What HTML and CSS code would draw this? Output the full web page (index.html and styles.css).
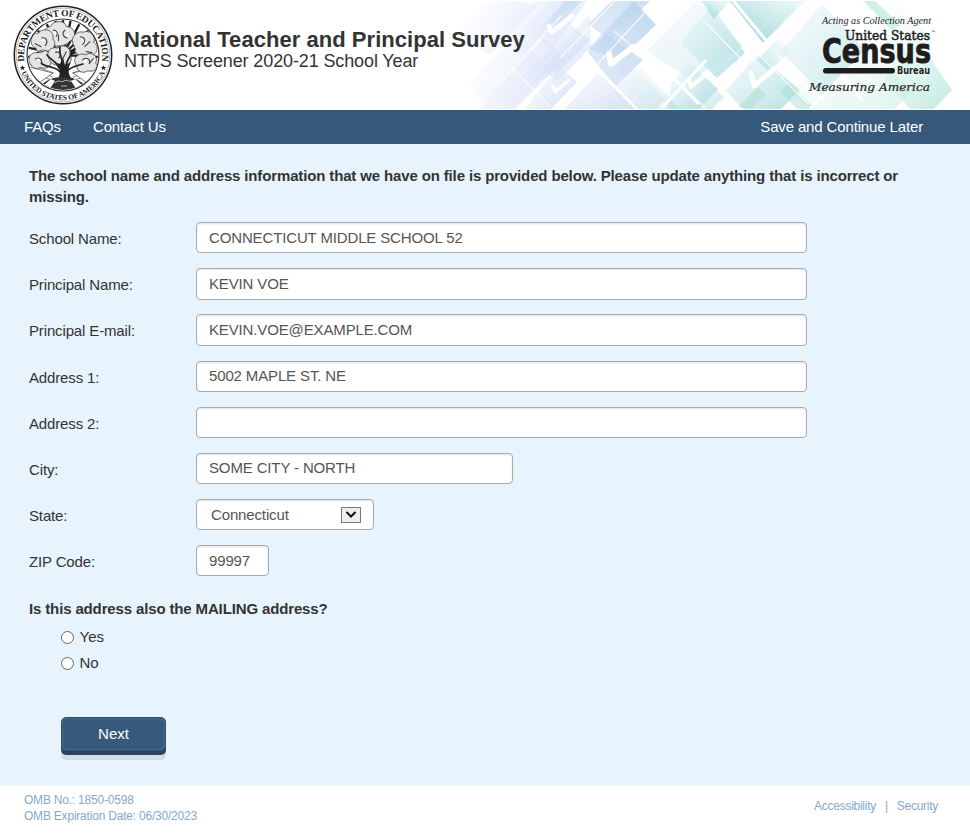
FILE: index.html
```html
<!DOCTYPE html>
<html lang="en">
<head>
	<meta charset="utf-8">
	<meta name="viewport" content="width=device-width, initial-scale=1">
	<title>National Teacher and Principal Survey</title>
	<link rel="stylesheet" href="styles.css">
</head>
<body>
	<header class="banner">
		<svg class="banner-art" width="530" height="108" viewBox="440 1 530 108" aria-hidden="true">
			<defs>
				<linearGradient id="blue" x1="0" y1="0" x2="1" y2="1">
					<stop offset="0" stop-color="#f3f6ff" stop-opacity=".5"/>
					<stop offset="1" stop-color="#c6d5f1" stop-opacity=".75"/>
				</linearGradient>
				<linearGradient id="deep" x1="1" y1="0" x2="0" y2="1">
					<stop offset="0" stop-color="#b5d3ec"/>
					<stop offset="1" stop-color="#d0def4" stop-opacity=".8"/>
				</linearGradient>
				<linearGradient id="aqua" x1="0" y1="0" x2="1" y2="1">
					<stop offset="0" stop-color="#eaf7f9" stop-opacity=".5"/>
					<stop offset="1" stop-color="#a3d8dd" stop-opacity=".8"/>
				</linearGradient>
				<linearGradient id="aquaup" x1="0" y1="1" x2="1" y2="0">
					<stop offset="0" stop-color="#83cdcf" stop-opacity=".9"/>
					<stop offset="1" stop-color="#ecf8f8" stop-opacity=".7"/>
				</linearGradient>
				<linearGradient id="mint" x1="0" y1="0" x2="1" y2="1">
					<stop offset="0" stop-color="#f0fbf8" stop-opacity=".6"/>
					<stop offset="1" stop-color="#b4e5d8" stop-opacity=".8"/>
				</linearGradient>
				<linearGradient id="fade">
					<stop offset="0" stop-color="#fff"/>
					<stop offset="1" stop-color="#fff" stop-opacity="0"/>
				</linearGradient>
			</defs>
			<!-- pale blue squares -->
			<g fill="url(#blue)">
				<path d="M455 35l38-38 45 8-48 50z"/>
				<path d="M470 82l45-47 35 34-43 42h-22z"/>
				<path d="M504 32l34-34h40l-33 36-21 20z"/>
				<path d="M523 26l30-28h36l-36 51z"/>
				<path d="M513 72l31-34 21 21-50 50h-37z"/>
				<path d="M529 25l24 24 37-34 1 32-33 34-50-33z" opacity=".7"/>
				<path d="M553 49l17-25 20 16-33 34-24-17z"/>
				<path d="M536 94l24-27 17 15-27 28h-26z"/>
				<path d="M565 109l33-37 43 37z"/>
				<path d="M608 82l18-20 39 37-14 14h-21z" opacity=".6"/>
			</g>
			<g fill="url(#deep)">
				<path d="M588 24l26-25h38l-42 42z" opacity=".7"/>
				<path d="M634 1l22 24-36 34-32-10z" opacity=".9"/>
				<path d="M588 52l18-18 37 26-28 27z" opacity=".75"/>
				<path d="M544 24l24-26h17l-34 35z" opacity=".6"/>
			</g>
			<!-- teal squares -->
			<g fill="url(#aqua)">
				<path d="M643 48l52-51 48 49-52 34z" opacity=".5"/>
				<path d="M680 43l32-38 33 48-28 25z"/>
				<path d="M672 82l18-19 28 26-20 21h-31z"/>
				<path d="M614 92l24-26 43 43h-46z" opacity=".5"/>
				<path d="M781 51l41-47 44 47-42 45z" opacity=".8"/>
				<path d="M725 90l32-36 43 36-20 20h-36z"/>
				<path d="M700 72l24 25-13 13h-34z" opacity=".7"/>
			</g>
			<path fill="url(#aquaup)" d="M728-1h79l-43 45z"/>
			<path fill="url(#aquaup)" d="M700-1h32l-18 20z" opacity=".8"/>
			<path fill="url(#aquaup)" d="M757 60l22-22 12 12-22 22z" opacity=".5"/>
			<g fill="url(#mint)">
				<path d="M792 92l30-31 48 48h-61z" opacity=".4"/>
				<path d="M873 24l20-22 41 38-28 32z" opacity=".3"/>
				<path d="M898 54l17-18 37 54-18 19h-24l-25-30z"/>
				<path d="M845 73l25-24 43 42-21 20h-22z" opacity=".6"/>
			</g>
			<path fill="#a5dfd4" opacity=".5" d="M780 91l9-8 26 26h-18zM863 1h12l25 24-8 5zM738 107l20-20 8 8-15 14z"/>
			<!-- light seams between the squares -->
			<g fill="none" stroke="#fff">
				<path stroke-width="3" d="M598 70l40 40M643 48l56 56M697-2l-57 57M706 60l-44 48M731-2l38 46M810-2l-46 46-32 32M865 52l-55 57"/>
				<path stroke-width="1.2" opacity=".8" d="M500 83l62-68M508 64l42 42M585 78l64-70M618-2l-58 60M614 31l48 40M673 76l36 36M775 52l48 50M827 3l58 62M885 26l43 48M720 96l38-42 50 50M700 17l42 43"/>
				<path stroke-width=".7" opacity=".6" d="M470 42l64 68M525 0l-65 70M538 30l60 60M600 0l-94 110M665 66l-40 43M690 10l-50 51M791 0l-60 59M851 0l-70 80"/>
			</g>
			<!-- check marks -->
			<g fill="none" stroke="#fff" stroke-linecap="round" stroke-linejoin="round">
				<path stroke-width="5" d="M549 26l3 6 20-16"/>
				<path stroke-width="6" d="M609 54l2 10 22-17"/>
				<path stroke-width="3" d="M553 86l2 6 14-12"/>
				<path stroke-width="4" d="M689 80l2 7 13-11"/>
				<path stroke-width="5" d="M751 73l3 13 20-17"/>
			</g>
			<path fill="url(#fade)" d="M440 0h115v110H440z"/>
		</svg>

		<svg class="seal" width="100" height="100" viewBox="-50 -50 100 100" role="img" aria-label="Department of Education seal">
			<defs>
				<path id="arc-top" d="M-37.5 10.8A39 39 0 1 1 37.5 10.8"/>
				<path id="arc-bottom" d="M-43.6 12A45.2 45.2 0 0 0 43.6 12"/>
				<clipPath id="disc"><circle r="35"/></clipPath>
			</defs>
			<circle r="48.7" fill="#fff" stroke="#222" stroke-width="1.5"/>
			<circle r="46.9" fill="none" stroke="#888" stroke-width=".6"/>
			<circle r="36" fill="#fff" stroke="#333" stroke-width="1.2"/>
			<g clip-path="url(#disc)">
				<path stroke="#222" stroke-width="2.4" d="M0 0V-36M0 0l-8-36M0 0l8-36M0 0l-18-34M0 0l18-34M0 0l-28-27M0 0l28-27M0 0l-36-18M0 0l36-18M0 0l-38-8M0 0l38-8M0 0l-38 2M0 0l38 2"/>
				<path stroke="#777" stroke-width=".8" d="M-36 13L-10 22M-36 17l25 8M-35 9l26 9M36 13L10 22M36 17L11 25M35 9L9 18"/>
				<path fill="#fff" stroke="#555" stroke-width=".8" d="M-34 12l24 6-17 12zM34 12L10 18l17 12z"/>
				<g transform="translate(0 1) scale(1.13)">
					<g fill="#e4e4e4" stroke="#555" stroke-width=".8">
						<path d="M-12-12c-8-2-7-13 1-14 2-6 13-6 14 0 8 0 10 10 3 13-4 5-14 6-18 1z"/>
						<path d="M-24-7c-7-3-5-13 2-13 4-6 15-3 13 5 5 5-2 13-7 10-3 4-7 2-8-2z"/>
						<path d="M10-9c-5-6 2-14 8-12 5-3 12 4 9 9 6 3 3 13-4 11-5 4-14 0-13-8z"/>
						<path d="M-28 8c-5-4-1-12 5-11 4-5 13-1 12 5 3 6-4 11-9 8-3 2-7 1-8-2z"/>
						<path d="M12 8c-5-5 2-12 8-9 5-4 12 2 9 7 3 5-3 9-7 7-4 3-10 1-10-5z"/>
						<path d="M-12 3c-4-6 1-12 7-10 5-5 13 0 11 6 4 5-2 11-7 8-4 3-10 0-11-4z"/>
					</g>
					<g fill="none" stroke="#fff" stroke-width="2">
						<path d="M-8-19l3-4M-19-13l3-3M17-15l3 3M-22 4l3-3M18 5l4-2M-5-5l4 2M4-20l-1 4"/>
					</g>
					<g fill="none" stroke="#444" stroke-width="1">
						<path d="M-9-23c4 0 5 3 3 6M2-23c-4 3-1 7 2 7M-19-16c5-1 6 4 3 7M-25-11l6 3M15-17c4 0 6 4 2 7M24-13l-5 5M-25 3c4-3 7 0 6 4M-15 9l-5-3M17 4c3-4 8-1 6 3M27 2l-4 5M-7-3c4-2 6 2 3 5M3-4l-3 6M-4-19v6M20-4l6 1M-23-3l6-1"/>
					</g>
				</g>
				<path fill="none" stroke="#222" stroke-width="1.7" stroke-linecap="round" d="M-2 18C-6 11-14 13-21 9M-4 13c-2-6-8-8-12-13M3 17c5-6 11-6 17-8M3 12c0-8 6-12 9-18M0 9c-2-8-4-11-3-17"/>
				<path fill="#222" d="M-6 26c5-8 3-14-3-19l6 2 3-7 2 9 6-4c-4 8-3 12 2 19z"/>
				<path fill="#333" d="M-24 33c5-8 15-11 24-11s19 3 24 11v5h-48z"/>
				<path stroke="#ddd" stroke-width=".8" fill="none" d="M-8 28c3-4 6 0 9-2s4 1 8 0M-2 31h6"/>
				<path fill="#fff" d="M-20 31l8-7 4 2-6 9zM20 31l-8-7-4 2 6 9z"/>
			</g>
			<text class="seal-text"><textPath href="#arc-top" startOffset="50%" textLength="135">DEPARTMENT OF EDUCATION</textPath></text>
			<text class="seal-text seal-text-small"><textPath href="#arc-bottom" startOffset="50%" textLength="106">UNITED STATES OF AMERICA</textPath></text>
			<path fill="#222" d="M-40.5 10l.8 1.9h2l-1.6 1.3.6 2-1.8-1.2-1.8 1.2.6-2-1.6-1.3h2zM40.5 10l.8 1.9h2l-1.6 1.3.6 2-1.8-1.2-1.8 1.2.6-2-1.6-1.3h2z"/>
		</svg>

		<div class="titles">
			<h1>National Teacher and Principal Survey</h1>
			<p>NTPS Screener 2020-21 School Year</p>
		</div>

		<svg class="census" width="150" height="90" viewBox="800 10 150 90" role="img" aria-label="United States Census Bureau">
			<g fill="#1d1d1d">
				<text x="822" y="24" class="census-agent" textLength="109" lengthAdjust="spacingAndGlyphs">Acting as Collection Agent</text>
				<text x="845" y="40" class="census-us" textLength="85" lengthAdjust="spacingAndGlyphs">United States</text>
				<text x="931" y="33" class="census-tm">™</text>
				<text x="822" y="62.5" class="census-name" textLength="109" lengthAdjust="spacingAndGlyphs">Census</text>
				<rect x="823" y="68" width="72" height="5.5" rx="2.7"/>
				<text x="897" y="73.5" class="census-bureau" textLength="33" lengthAdjust="spacingAndGlyphs">Bureau</text>
				<text x="809" y="90.5" class="census-tag" textLength="121" lengthAdjust="spacingAndGlyphs">Measuring America</text>
			</g>
		</svg>
	</header>

	<nav class="menu">
		<a>FAQs</a>
		<a>Contact Us</a>
		<a class="save">Save and Continue Later</a>
	</nav>

	<main class="content">
		<p class="intro">The school name and address information that we have on file is provided below. Please update anything that is incorrect or missing.</p>

		<form>
			<div class="row">
				<label for="school">School Name:</label>
				<input id="school" class="field" type="text" value="CONNECTICUT MIDDLE SCHOOL 52">
			</div>
			<div class="row">
				<label for="principal">Principal Name:</label>
				<input id="principal" class="field" type="text" value="KEVIN VOE">
			</div>
			<div class="row">
				<label for="email">Principal E-mail:</label>
				<input id="email" class="field" type="text" value="KEVIN.VOE@EXAMPLE.COM">
			</div>
			<div class="row">
				<label for="address1">Address 1:</label>
				<input id="address1" class="field" type="text" value="5002 MAPLE ST. NE">
			</div>
			<div class="row">
				<label for="address2">Address 2:</label>
				<input id="address2" class="field" type="text" value="">
			</div>
			<div class="row">
				<label for="city">City:</label>
				<input id="city" class="field city" type="text" value="SOME CITY - NORTH">
			</div>
			<div class="row">
				<label>State:</label>
				<div class="field state">
					<span>Connecticut</span>
					<span class="arrow">
						<svg width="12" height="8" viewBox="0 0 12 8"><path d="M1.5 1L6 5.5 10.5 1" fill="none" stroke="#111" stroke-width="2"/></svg>
					</span>
				</div>
			</div>
			<div class="row">
				<label for="zip">ZIP Code:</label>
				<input id="zip" class="field zip" type="text" value="99997">
			</div>

			<p class="question">Is this address also the MAILING address?</p>
			<div class="options">
				<label class="option"><input type="radio" name="mailing">Yes</label>
				<label class="option"><input type="radio" name="mailing">No</label>
			</div>

			<button class="next" type="button">Next</button>
		</form>
	</main>

	<footer class="footer">
		<div>OMB No.: 1850-0598<br>OMB Expiration Date: 06/30/2023</div>
		<div class="links"><a>Accessibility</a><span>|</span><a>Security</a></div>
	</footer>
</body>
</html>
```
FILE: styles.css
```css
* {
	box-sizing: border-box;
}

body {
	margin: 0;
	background: #fff;
	color: #333;
	font-family: "Liberation Sans", Arial, sans-serif;
	font-size: 15px;
	letter-spacing: -0.14px;
}

h1, p {
	margin: 0;
}

/* banner */
.banner {
	position: relative;
	display: flex;
	align-items: flex-start;
	height: 110px;
	padding-left: 13px;
}

.banner svg {
	letter-spacing: 0;
}

.banner-art {
	position: absolute;
	top: 1px;
	right: 0;
}

.seal {
	position: relative;
	margin-top: 5px;
}

.seal-text {
	fill: #222;
	font-family: "Liberation Serif", "Times New Roman", serif;
	font-size: 9.5px;
	font-weight: bold;
	text-anchor: middle;
}

.seal-text-small {
	font-size: 7.5px;
}

.titles {
	position: relative;
	margin: 27px 0 0 11px;
	white-space: nowrap;
}

.titles h1 {
	font-size: 22px;
	line-height: 25px;
	letter-spacing: 0.04px;
}

.titles p {
	font-size: 18px;
	line-height: 18px;
	letter-spacing: -0.12px;
}

.census {
	position: relative;
	margin: 10px 20px 0 auto;
	overflow: visible;
}

.census-agent {
	font: italic 9.5px "Liberation Serif", serif;
}

.census-us {
	font: 13px "DejaVu Serif", serif;
	stroke: #1d1d1d;
	stroke-width: 0.5px;
}

.census-tm {
	font: 4px "Liberation Sans", sans-serif;
}

.census-name {
	font: bold 33.5px "DejaVu Sans", sans-serif;
	stroke: #1d1d1d;
	stroke-width: 0.9px;
}

.census-bureau {
	font: bold 10px "DejaVu Sans", sans-serif;
}

.census-tag {
	font: italic 11.5px "DejaVu Serif", serif;
	stroke: #1d1d1d;
	stroke-width: 0.2px;
}

/* menu */
.menu {
	display: flex;
	align-items: center;
	gap: 32px;
	height: 34px;
	padding: 0 47px 2px 24px;
	background: #36597b;
	color: #fff;
}

.menu .save {
	margin-left: auto;
}

/* form */
.content {
	height: 642px;
	padding: 21px 29px 0;
	background: #e7f4fd;
}

.intro {
	width: 890px;
	margin-bottom: 15.1px;
	font-weight: bold;
	line-height: 21px;
}

.row {
	display: flex;
	align-items: flex-start;
	height: 46.15px;
}

.row > label {
	width: 167px;
	line-height: 32px;
	padding-top: 1px;
}

.field {
	width: 611px;
	height: 31.3px;
	padding: 0 12px 1px;
	border: 1px solid #aaa;
	border-radius: 4px;
	background: #fff;
	box-shadow: inset 0 1px 2px rgba(0, 0, 0, 0.12);
	color: #555;
	font: inherit;
	letter-spacing: inherit;
}

.city {
	width: 317px;
}

.state {
	display: flex;
	align-items: center;
	justify-content: space-between;
	width: 178px;
	padding: 0 12px 0 14px;
}

.arrow {
	display: flex;
	align-items: center;
	justify-content: center;
	width: 20px;
	height: 16px;
	border: 1px solid #777;
	background: #eee;
}

.zip {
	width: 73px;
}

.question {
	margin-top: 8px;
	font-weight: bold;
	line-height: 20px;
}

.options {
	padding: 4px 0 0 32px;
	letter-spacing: 0;
}

.option {
	display: flex;
	align-items: center;
	height: 26px;
}

.option input {
	appearance: none;
	width: 13px;
	height: 13px;
	margin: 2px 5.5px 0 0;
	border: 1px solid #666;
	border-radius: 50%;
	background: #fff;
}

.next {
	display: block;
	width: 105px;
	height: 34px;
	margin: 42px 0 0 32px;
	padding: 0 0 1px;
	border: 1px solid #2f4f6e;
	border-radius: 5px;
	background: #36597b;
	box-shadow: inset 0 0 2px #6d91ad, 0 4px 0 #2b4560, 0 9px 0 #d0dde5;
	color: #fff;
	font: inherit;
}

/* footer */
.footer {
	display: flex;
	justify-content: space-between;
	padding: 6px 32px 0 24px;
	color: #85a9cc;
	font-size: 12px;
	line-height: 16px;
	letter-spacing: -0.21px;
}

.links {
	display: flex;
	gap: 9px;
	padding-top: 6px;
	letter-spacing: -0.27px;
}
```
